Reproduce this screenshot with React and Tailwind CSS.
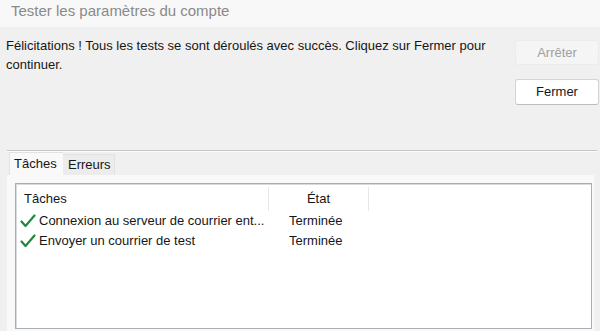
import React from "react";

function Check() {
  return (
    <svg width="16" height="14" viewBox="0 0 16 14" className="shrink-0">
      <path d="M1.5 7.5 L5.5 12 L14.5 1.5" fill="none" stroke="#1f8a3b" strokeWidth="2.2" strokeLinecap="round" strokeLinejoin="round" />
    </svg>
  );
}

export default function App() {
  return (
    <div className="w-[600px] h-[331px] overflow-hidden bg-[#f0f0f0] text-[#161616] flex flex-col" style={{ fontFamily: '"Liberation Sans", Arial, sans-serif' }}>
      <div className="h-[27px] shrink-0 bg-[#f8f8f8] pl-[11px] text-[15px] leading-[21px] text-[#8a8a8a]">
        Tester les paramètres du compte
      </div>
      <div className="flex h-[123px] shrink-0">
        <div className="flex-1 pl-[6px] pt-[9px] text-[13px] leading-[19px] pr-4">
          Félicitations ! Tous les tests se sont déroulés avec succès. Cliquez sur Fermer pour continuer.
        </div>
        <div className="w-[84px] mr-[1px] pt-[13px] flex flex-col gap-[14px]">
          <div className="h-[25px] rounded-[3px] bg-[#f5f5f5] border border-[#ebebeb] text-[13px] text-[#a0a0a0] flex items-center justify-center">Arrêter</div>
          <div className="h-[26px] rounded-[3px] bg-white border border-[#d4d4d4] border-b-[#bdbdbd] text-[13px] flex items-center justify-center">Fermer</div>
        </div>
      </div>
      <div className="ml-[7px] mr-[3px] h-[2px] border-t border-[#c6c6c6] bg-[#fbfbfb] shrink-0"></div>
      <div className="flex items-end h-[23px] pl-[9px] shrink-0">
        <div className="h-[23px] w-[54px] bg-[#f9f9f9] border-l border-t border-[#e2e2e2] text-[13px] flex items-center pl-[4px]">Tâches</div>
        <div className="h-[21px] w-[52px] bg-[#ececec] border-t border-r border-[#e2e2e2] text-[13px] flex items-center pl-[5px]">Erreurs</div>
      </div>
      <div className="flex-1 ml-[7px] mr-[6px] bg-[#f9f9f9] pl-[8px] pr-[2px] pt-[8px] pb-[2px] flex">
        <div className="flex-1 bg-white border border-[#a9aeb4] shadow-[inset_1px_1px_0_#d8dbde] text-[13px]">
          <div className="flex h-[27px] items-center pt-[2px]">
            <div className="w-[253px] h-[24px] border-r border-[#e6e6e6] pl-[8px] flex items-center">Tâches</div>
            <div className="w-[100px] h-[24px] border-r border-[#e6e6e6] flex items-center justify-center">État</div>
          </div>
          {["Connexion au serveur de courrier ent...", "Envoyer un courrier de test"].map((t) => (
            <div key={t} className="flex h-[20px] items-center">
              <div className="w-[253px] pl-[4px] flex items-center gap-[3px] whitespace-nowrap">
                <Check />
                <span>{t}</span>
              </div>
              <div className="pl-[20px]">Terminée</div>
            </div>
          ))}
        </div>
      </div>
    </div>
  );
}
